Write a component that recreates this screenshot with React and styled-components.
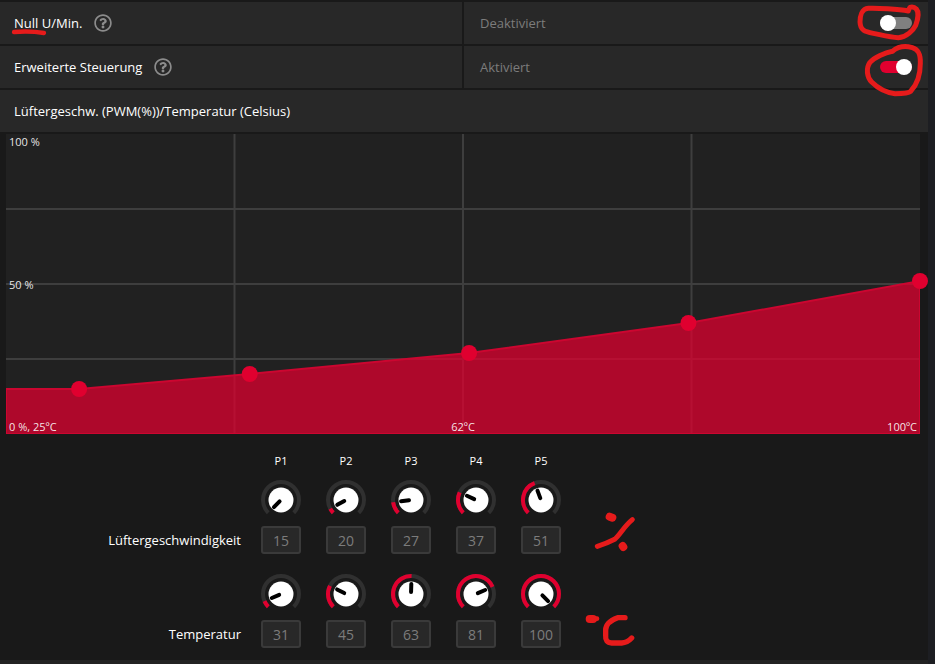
import React, { useState } from "react"
import styled, { createGlobalStyle } from "styled-components"
import { FaRegQuestionCircle } from "react-icons/fa"

const GlobalStyle = createGlobalStyle`
* {
  box-sizing: border-box;
}

body {
  margin: 0;
  background: #1d1e22;
  color: #fff;
  font-family: "Open Sans", "Noto Sans", sans-serif;
  font-size: 13px;
  line-height: 20px;
}
`

const Page = styled.div`
margin-right: 7px;
background: #191919;
`

const Settings = styled.section`
position: relative;
display: grid;
gap: 2px;
padding: 2px 0;
`

const SettingRow = styled.div`
display: grid;
grid-template-columns: calc(50% - 2px) 1fr;
gap: 2px;
`

const Cell = styled.div`
display: flex;
align-items: center;
height: 42px;
padding: 0 16px 0 14px;
background: #282828;
`

const ValueCell = styled(Cell)`
justify-content: space-between;
padding-left: 16px;
color: #7c7c7c;
`

const Title = styled.h2`
margin: 0;
font-size: 13px;
font-weight: 400;
`

const HelpButton = styled.button`
display: flex;
margin-left: 12px;
padding: 0;
border: 0;
background: none;
color: #8c8c8c;
cursor: pointer;
`

const Switch = styled.input`
appearance: none;
display: flex;
align-items: center;
width: 32px;
height: 12px;
margin: 0;
border-radius: 6px;
background: #808080;
cursor: pointer;

&::before {
  content: "";
  width: 16px;
  height: 16px;
  flex: none;
  border-radius: 50%;
  background: #fff;
}

&:checked {
  justify-content: flex-end;
  background: #e0002f;
}
`

const Chart = styled.div`
position: relative;
margin: 0 8px 0 6px;
background: #212121;
font-size: 11px;
line-height: 14px;
`

const Plot = styled.svg`
display: block;
width: 100%;
height: auto;
overflow: visible;
`

const AxisLabel = styled.span`
position: absolute;
color: rgba(255, 255, 255, 0.9);
`

const TopLabel = styled(AxisLabel)`
top: 1px;
left: 3px;
`

const MiddleLabel = styled(AxisLabel)`
top: calc(50% - 6px);
left: 3px;
`

const BottomLabels = styled.div`
position: absolute;
inset: auto 3px 0 3px;
display: grid;
grid-template-columns: 1fr auto 1fr;
color: rgba(255, 255, 255, 0.9);

span:last-child {
  text-align: right;
}
`

const Controls = styled.div`
display: grid;
grid-template-columns: 240px repeat(5, 40px) 50px;
column-gap: 25px;
margin-left: -4px;
padding: 17px 0 12px;
`

const PointName = styled.span`
grid-column: ${props => props.$column};
font-size: 11px;
text-align: center;
`

const RowLabel = styled.span`
align-self: end;
justify-self: end;
padding-bottom: 4px;
margin-right: -5px;
`

const Point = styled.div`
display: flex;
flex-direction: column;
align-items: center;
gap: 6px;
padding-top: 9px;
`

const Row = styled.div`
display: grid;
grid-column: 1 / -1;
grid-template-columns: subgrid;
padding-bottom: ${props => (props.$last ? "0" : "11px")};
`

const KnobBox = styled.div`
position: relative;
height: 40px;
width: 40px;
`

const KnobRange = styled.input`
position: absolute;
inset: 0;
width: 100%;
height: 100%;
margin: 0;
opacity: 0;
cursor: pointer;
`

const ValueInput = styled.input`
width: 40px;
height: 28px;
padding: 0;
border: 2px solid #3a3a3a;
border-radius: 3px;
background: #282828;
color: #7c7c7c;
font: inherit;
font-size: 14px;
text-align: center;
`

const Note = styled.svg`
align-self: end;
width: 60px;
height: 50px;
margin-left: -3px;
overflow: visible;
`

const Marker = styled.svg`
position: absolute;
top: 0;
${props => props.$side}: ${props => (props.$side === "right" ? "-7px" : "0")};
width: 100px;
height: 145px;
pointer-events: none;
`

const Footer = styled.div`
height: 4px;
background: #222;
`

const pen = { fill: "none", stroke: "#e61b1b", strokeLinecap: "round", strokeLinejoin: "round" }

const names = ["P1", "P2", "P3", "P4", "P5"]

// the dial turns 270 degrees, from lower left to lower right
const polar = (radius, degrees) => {
  const rad = (degrees * Math.PI) / 180
  return [20 + radius * Math.sin(rad), 20 - radius * Math.cos(rad)]
}

const arc = (from, to) =>
  `M${polar(18, from).join(" ")}A18 18 0 ${to - from > 180 ? 1 : 0} 1 ${polar(18, to).join(" ")}`

const Knob = ({ label, min, value, onChange }) => {
  const angle = -135 + ((value - min) / (100 - min)) * 270
  const [x1, y1] = polar(2, angle)
  const [x2, y2] = polar(10, angle)

  return (
    <KnobBox>
      <svg width="40" height="40" overflow="visible" aria-hidden="true">
        <path d={arc(-135, 135)} fill="none" stroke="#303030" strokeWidth="4" />
        {value > min && <path d={arc(-135, angle)} fill="none" stroke="#e0002f" strokeWidth="4" />}
        <circle cx="20" cy="20" r="12.5" fill="#fff" />
        <line x1={x1} y1={y1} x2={x2} y2={y2} stroke="#000" strokeWidth="4" strokeLinecap="round" />
      </svg>
      <KnobRange type="range" aria-label={label} min={min} max="100" value={value} onChange={onChange} />
    </KnobBox>
  )
}

const KnobRow = ({ label, min, values, setValues, last, children }) => {
  const change = index => e => {
    const next = Math.min(100, Math.max(min, Number(e.target.value) || min))
    setValues(values.map((v, i) => (i === index ? next : v)))
  }

  return (
    <Row $last={last}>
      <RowLabel>{label}</RowLabel>
      {values.map((value, i) => (
        <Point key={names[i]}>
          <Knob label={`${label} ${names[i]}`} min={min} value={value} onChange={change(i)} />
          <ValueInput aria-label={`${label} ${names[i]}`} value={value} onChange={change(i)} />
        </Point>
      ))}
      {children}
    </Row>
  )
}

const FanChart = ({ speeds, temps }) => {
  const points = speeds.map((speed, i) => [((temps[i] - 25) / 75) * 914, 300 - speed * 3])
  const area = [[0, 300], [0, points[0][1]], ...points, [914, 300]]

  return (
    <Chart>
      <Plot viewBox="0 0 914 300" aria-hidden="true">
        <path d="M228.5 0V300M457 0V300M685.5 0V300M0 75H914M0 150H914M0 225H914" stroke="#3e3e3e" strokeWidth="2" />
        <polygon points={area.join(" ")} fill="#e0002f" fillOpacity="0.74" />
        <clipPath id="plot-area">
          <rect width="914" height="300" />
        </clipPath>
        <polygon
          points={area.join(" ")}
          fill="none"
          stroke="#cb0630"
          strokeWidth="2"
          clipPath="url(#plot-area)"
        />
        {points.map(([x, y], i) => (
          <circle key={names[i]} cx={x} cy={y} r="8" fill="#e0002f" />
        ))}
      </Plot>
      <TopLabel>100 %</TopLabel>
      <MiddleLabel>50 %</MiddleLabel>
      <BottomLabels>
        <span>0 %, 25ºC</span>
        <span>62ºC</span>
        <span>100ºC</span>
      </BottomLabels>
    </Chart>
  )
}

const Setting = ({ id, title, checked, onChange }) => (
  <SettingRow>
    <Cell>
      <label htmlFor={id}>{title}</label>
      <HelpButton type="button" aria-label={`Hilfe: ${title}`}>
        <FaRegQuestionCircle size={18} />
      </HelpButton>
    </Cell>
    <ValueCell>
      <span>{checked ? "Aktiviert" : "Deaktiviert"}</span>
      <Switch id={id} type="checkbox" checked={checked} onChange={e => onChange(e.target.checked)} />
    </ValueCell>
  </SettingRow>
)

const App = () => {
  const [zeroRpm, setZeroRpm] = useState(false)
  const [advanced, setAdvanced] = useState(true)
  const [speeds, setSpeeds] = useState([15, 20, 27, 37, 51])
  const [temps, setTemps] = useState([31, 45, 63, 81, 100])

  return (
    <>
      <GlobalStyle />
      <Page>
        <Settings>
          <Setting id="zero-rpm" title="Null U/Min." checked={zeroRpm} onChange={setZeroRpm} />
          <Setting id="advanced" title="Erweiterte Steuerung" checked={advanced} onChange={setAdvanced} />
          <Cell>
            <Title>Lüftergeschw. (PWM(%))/Temperatur (Celsius)</Title>
          </Cell>
          <Marker $side="left" viewBox="0 0 300 435" aria-hidden="true">
            <path d="M42 96C65 94 108 95 132 99" {...pen} strokeWidth="13" />
          </Marker>
          <Marker $side="right" viewBox="0 0 300 435" aria-hidden="true">
            <path
              d="M220 33C190 27 125 24 100 25C80 26 75 50 75 66C76 92 90 95 115 100C140 105 165 112 190 113C215 112 235 90 242 76C249 58 252 36 244 27Q236 19 225 22L219 33"
              {...pen}
              strokeWidth="15"
            />
            <path
              d="M172 154C150 158 118 173 105 187C92 205 96 232 110 246C130 266 155 278 180 281C200 281 219 281 227 274C252 248 256 214 256 190C257 160 249 148 232 143C208 136 190 139 172 154"
              {...pen}
              strokeWidth="15"
            />
          </Marker>
        </Settings>
        <FanChart speeds={speeds} temps={temps} />
        <Controls>
          {names.map((name, i) => (
            <PointName key={name} $column={i + 2}>{name}</PointName>
          ))}
          <KnobRow label="Lüftergeschwindigkeit" min={15} values={speeds} setValues={setSpeeds}>
            <Note viewBox="0 0 180 150" aria-hidden="true">
              <path d="M43 127Q72 118 95 106C112 92 122 68 148 47" {...pen} strokeWidth="15" />
              <path d="M80 38L88 41M119 126L121 129" {...pen} strokeWidth="24" />
            </Note>
          </KnobRow>
          <KnobRow label="Temperatur" min={25} values={temps} setValues={setTemps} last>
            <Note viewBox="0 0 180 150" aria-hidden="true">
              <path d="M126 59H104Q68 72 68 96V112Q66 134 86 135H116Q133 134 146 120" {...pen} strokeWidth="16" />
              <path d="M20 63H30" {...pen} strokeWidth="24" />
              <path d="M30 63L42 62" {...pen} strokeWidth="14" />
            </Note>
          </KnobRow>
        </Controls>
        <Footer />
      </Page>
    </>
  )
}

export default App
